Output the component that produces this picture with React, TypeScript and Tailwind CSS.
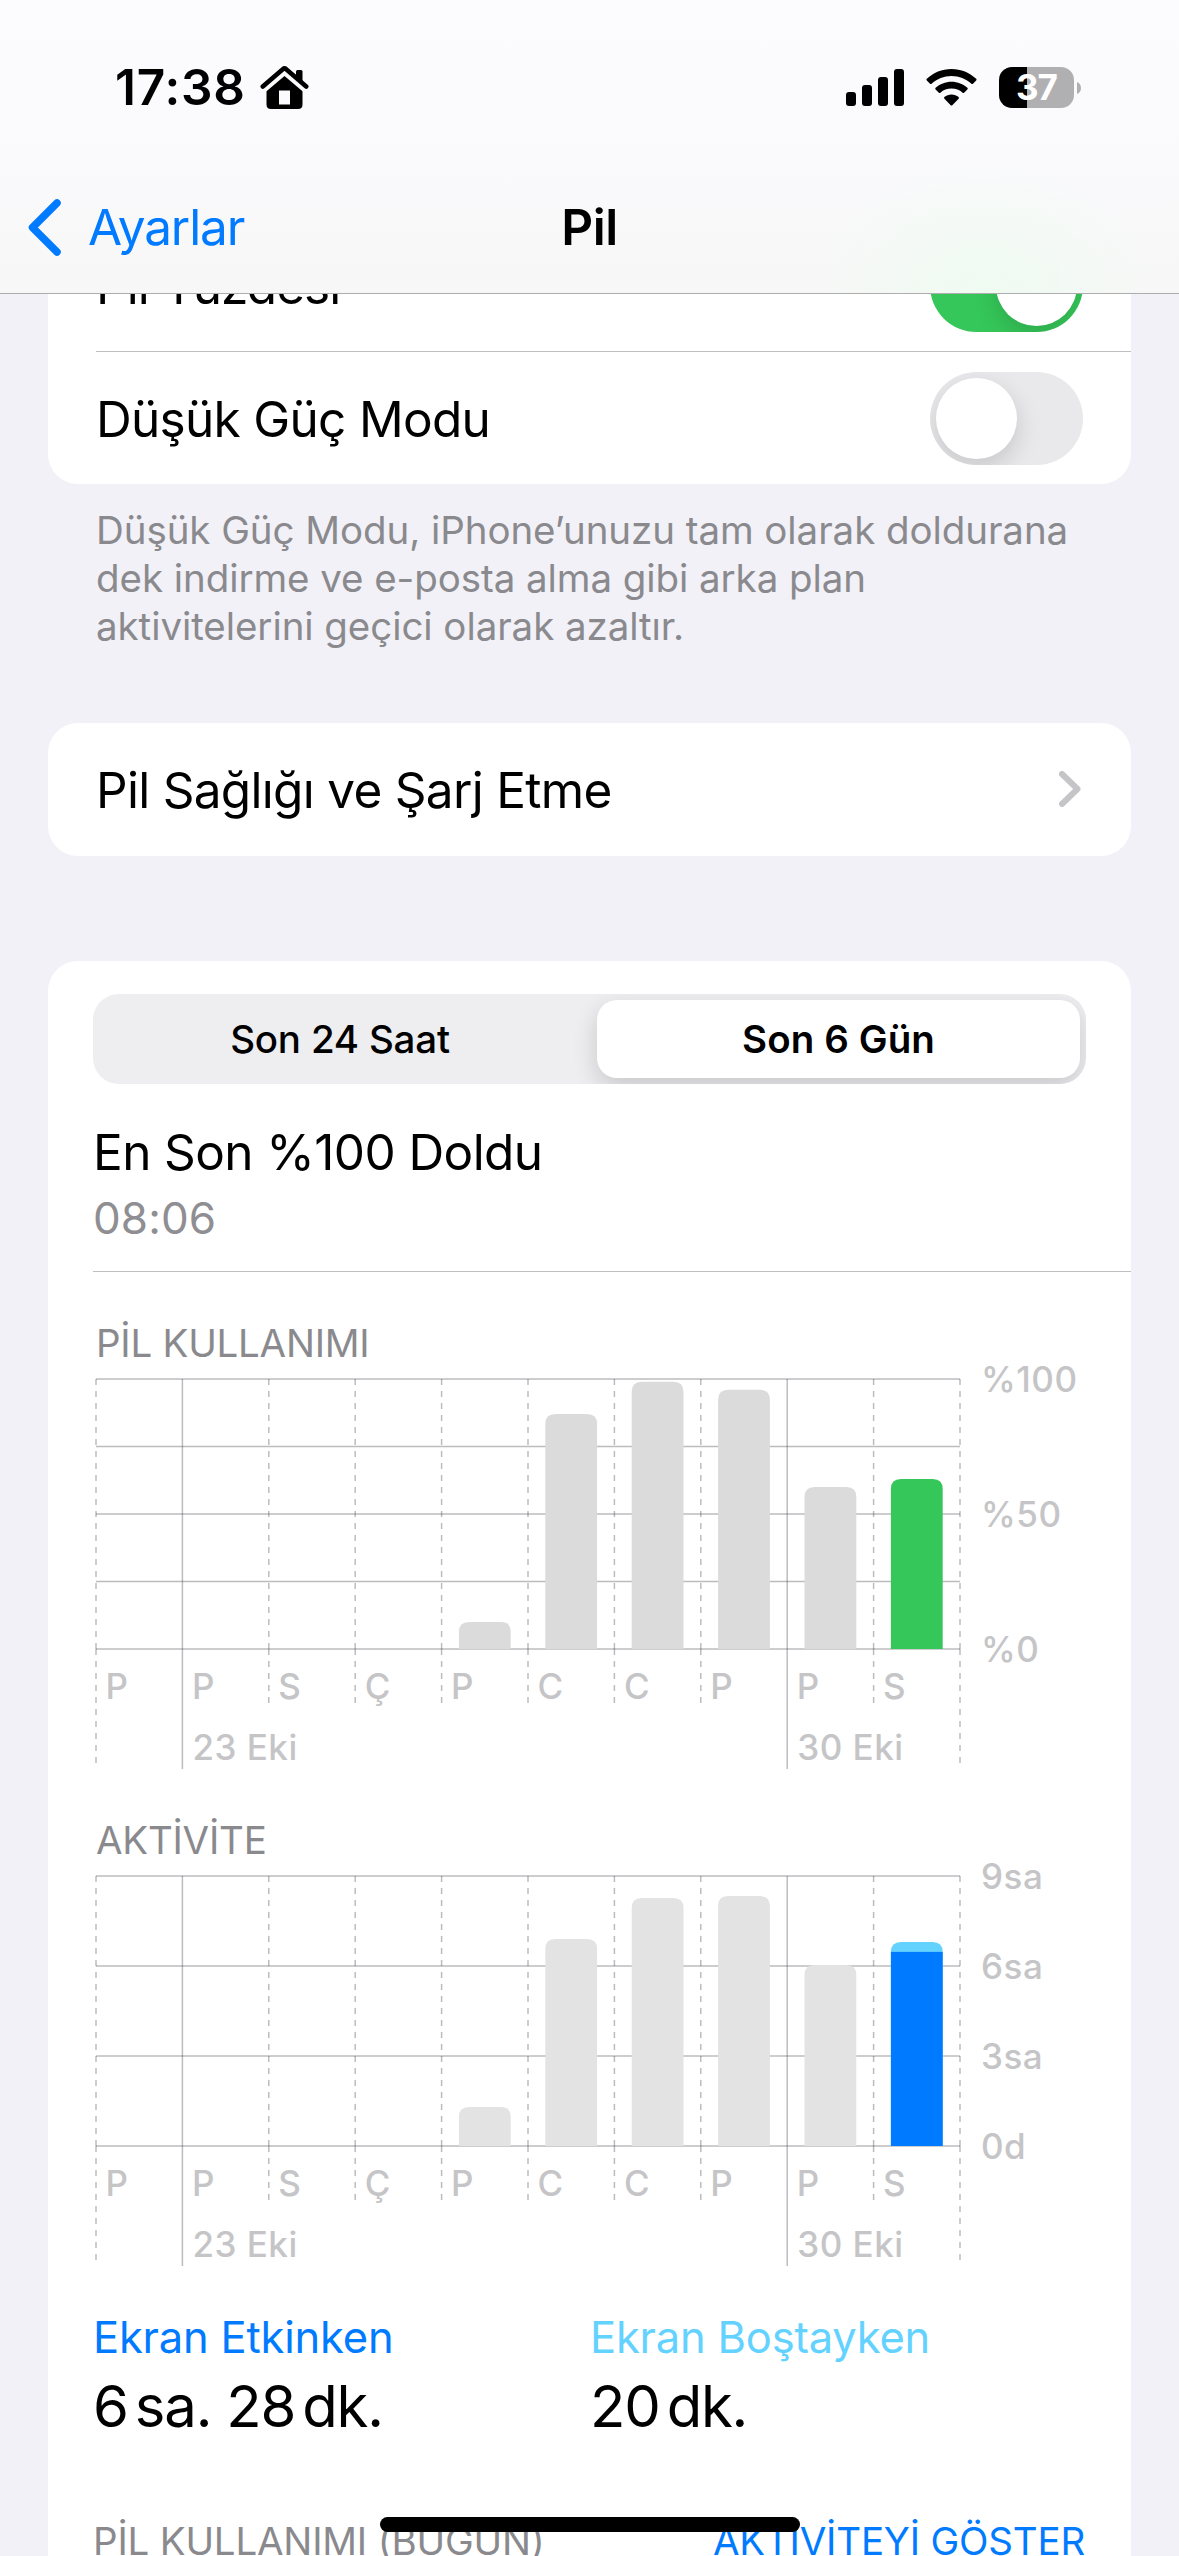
import { useState } from "react";

interface Bar {
  day: string;
  value: number;
  idle?: number;
}

interface ChartProps {
  title: string;
  bars: Bar[];
  max: number;
  step: number;
  labels: { value: number; text: string }[];
  barClass: string;
  activeClass: string;
}

const COL = 86.4;
const PLOT_W = 864;
const PLOT_H = 270;

const usage: Bar[] = [
  { day: "P", value: 0 },
  { day: "P", value: 0 },
  { day: "S", value: 0 },
  { day: "Ç", value: 0 },
  { day: "P", value: 10 },
  { day: "C", value: 87 },
  { day: "C", value: 99 },
  { day: "P", value: 96 },
  { day: "P", value: 60 },
  { day: "S", value: 63 },
];

const activity: Bar[] = [
  { day: "P", value: 0 },
  { day: "P", value: 0 },
  { day: "S", value: 0 },
  { day: "Ç", value: 0 },
  { day: "P", value: 1.3 },
  { day: "C", value: 6.9 },
  { day: "C", value: 8.27 },
  { day: "P", value: 8.33 },
  { day: "P", value: 6.03 },
  { day: "S", value: 6.47, idle: 0.33 },
];

// weeks start on these columns
const weeks = [
  { col: 1, text: "23 Eki" },
  { col: 8, text: "30 Eki" },
];

const Chart: React.FC<ChartProps> = ({
  title,
  bars,
  max,
  step,
  labels,
  barClass,
  activeClass,
}) => {
  const lines: number[] = [];
  for (let v = 0; v <= max; v += step) lines.push(PLOT_H - (v / max) * PLOT_H);

  return (
    <section className="mt-[47px]">
      <h2 className="pl-[3px] text-[38.5px] leading-[48px] tracking-[-0.25px] text-[#8a8a8e]">
        {title}
      </h2>
      <svg
        width="1035"
        height="390"
        className="mt-[12px] ml-[3px] block overflow-visible"
      >
        <g className="stroke-[#3c3c43]/34" strokeWidth="1.5">
          {lines.map((y) => (
            <line key={y} x1="0" x2={PLOT_W} y1={y} y2={y} />
          ))}
          {Array.from({ length: 11 }, (_, i) => {
            const x = i * COL;
            if (weeks.some((w) => w.col === i)) {
              return <line key={i} x1={x} x2={x} y1="0" y2="390" />;
            }
            const end = i === 0 || i === 10 ? 384 : 324;
            return (
              <g key={i} strokeDasharray="6 6">
                <line x1={x} x2={x} y1="0" y2={PLOT_H} />
                <line x1={x} x2={x} y1={PLOT_H} y2={end} />
              </g>
            );
          })}
        </g>
        {bars.map((bar, i) => {
          if (!bar.value) return null;
          const x = i * COL + 17.3;
          const total = ((bar.value + (bar.idle || 0)) / max) * PLOT_H;
          const h = (bar.value / max) * PLOT_H;
          const top = PLOT_H - total;
          const last = i === bars.length - 1;
          return (
            <g key={i}>
              <path
                d={`M${x} ${PLOT_H}V${top + 10}q0 -10 10 -10h31.8q10 0 10 10V${PLOT_H}z`}
                className={bar.idle ? "fill-[#64d2ff]" : last ? activeClass : barClass}
              />
              {bar.idle && (
                <rect x={x} y={PLOT_H - h} width="51.8" height={h} className={activeClass} />
              )}
            </g>
          );
        })}
        <g className="fill-[#c5c5c7] text-[35px] font-medium tracking-[0.5px]">
          {bars.map((bar, i) => (
            <text key={i} x={i * COL + 9.5} y="320">
              {bar.day}
            </text>
          ))}
          {weeks.map((w) => (
            <text key={w.col} x={w.col * COL + 10} y="381">
              {w.text}
            </text>
          ))}
          {labels.map((l) => (
            <text
              key={l.text}
              x="885"
              y={PLOT_H - (l.value / max) * PLOT_H + 13}
            >
              {l.text}
            </text>
          ))}
        </g>
      </svg>
    </section>
  );
};

const Toggle: React.FC<{ on: boolean; onClick: () => void }> = ({ on, onClick }) => (
  <button
    onClick={onClick}
    className={`flex h-[93px] w-[153px] overflow-hidden rounded-full p-[6px] ${
      on ? "justify-end bg-[#35c759]" : "bg-[#e9e9eb]"
    }`}
  >
    <span className="size-[81px] rounded-full bg-white shadow-[0_9px_24px_rgba(0,0,0,0.15)]" />
  </button>
);

const StatusBar = () => (
  <div className="flex h-[161px] items-center pt-[14px] pl-[115px]">
    <span className="w-[145px] text-[49.5px] font-semibold tracking-[0.8px]">17:38</span>
    <svg width="49" height="43" viewBox="0 0 49 43">
      <path
        d="M2.8 20.5 22.8 3.2Q24.5 1.8 26.2 3.2L46.2 20.5"
        fill="none"
        stroke="black"
        strokeWidth="4.6"
        strokeLinecap="round"
      />
      <path d="M36 5.5Q36 4 37.5 4H41Q42.5 4 42.5 5.5V16L36 10.5z" />
      <path
        fillRule="evenodd"
        d="M24.5 10 42.5 25.3V38.5Q42.5 43 38 43H11Q6.5 43 6.5 38.5V25.3zM19 24.5V38.5H30V24.5z"
      />
    </svg>
    <svg width="58" height="37" viewBox="0 0 58 37" className="ml-[537px]">
      <rect x="0" y="23" width="10" height="14" rx="3" />
      <rect x="16" y="16" width="10" height="21" rx="3" />
      <rect x="32" y="8" width="10" height="29" rx="3" />
      <rect x="48" y="0" width="10" height="37" rx="3" />
    </svg>
    <svg width="51" height="37" viewBox="0 0 51 37" className="ml-[22px]">
      <path d="M25.5 0C35 0 43.7 3.7 50.2 9.8Q51 10.6 50.2 11.4L47 14.7Q46.2 15.5 45.4 14.7C40.1 9.9 33.1 7 25.5 7S10.9 9.9 5.6 14.7Q4.8 15.5 4 14.7L.8 11.4Q0 10.6 .8 9.8C7.3 3.7 16 0 25.5 0z" />
      <path d="M25.5 12.7C31.6 12.7 37.2 15 41.4 18.8Q42.2 19.6 41.4 20.4L38.1 23.7Q37.4 24.4 36.6 23.7C33.6 21.1 29.7 19.6 25.5 19.6S17.4 21.1 14.4 23.7Q13.6 24.4 12.9 23.7L9.6 20.4Q8.8 19.6 9.6 18.8C13.8 15 19.4 12.7 25.5 12.7z" />
      <path d="M25.5 25.5C28.2 25.5 30.7 26.5 32.6 28.1Q33.4 28.9 32.6 29.7L26.3 36.2Q25.5 37 24.7 36.2L18.4 29.7Q17.6 28.9 18.4 28.1C20.3 26.5 22.8 25.5 25.5 25.5z" />
    </svg>
    <div className="ml-[22px] flex h-[41px] w-[75px] items-center justify-center rounded-[13px] bg-linear-to-r from-black from-37% to-[#b0b0b2] to-37%">
      <span className="text-[35px] leading-none font-bold tracking-[-1px] text-white">37</span>
    </div>
    <svg width="4" height="12" viewBox="0 0 4 12" className="ml-[3px]">
      <path d="M0 0C5.3 1.5 5.3 10.5 0 12z" fill="#b0b0b2" />
    </svg>
  </div>
);

function App() {
  const [percent, setPercent] = useState(true);
  const [lowPower, setLowPower] = useState(false);

  return (
    <div className="relative h-[2556px] w-[1179px] overflow-hidden bg-[#f2f1f7] font-['Inter','Liberation_Sans',sans-serif] text-black">
      <header className="h-[294px] border-b border-[#adadae] bg-[radial-gradient(ellipse_170px_130px_at_985px_294px,#effbf1,transparent),linear-gradient(#fcfcfe,#fafafc_55%,#f7f7f7)]">
        <StatusBar />
        <nav className="grid h-[132px] grid-cols-3 items-center text-[49.5px]">
          <button className="flex items-center pl-[27px] text-[#007aff]">
            <svg width="34" height="57" viewBox="0 0 34 57" fill="none">
              <path
                d="M30 4 5.5 28.5 30 53"
                stroke="currentColor"
                strokeWidth="7.5"
                strokeLinecap="round"
                strokeLinejoin="round"
              />
            </svg>
            <span className="ml-[27px] tracking-[-1.1px]">Ayarlar</span>
          </button>
          <h1 className="text-center font-semibold tracking-[-0.5px]">Pil</h1>
        </nav>
      </header>

      <main className="h-[2262px] overflow-hidden px-[48px] text-[49.5px] tracking-[-0.7px]">
        <div className="-mt-[74px] rounded-b-[30px] bg-white pl-[48px]">
          <div className="flex h-[132px] items-center justify-between border-b border-[#c0c0c3] pr-[48px]">
            <span className="pt-[2px] tracking-[-0.9px]">Pil Yüzdesi</span>
            <Toggle on={percent} onClick={() => setPercent(!percent)} />
          </div>
          <div className="flex h-[132px] items-center justify-between pr-[48px]">
            <span className="pt-[2px]">Düşük Güç Modu</span>
            <Toggle on={lowPower} onClick={() => setLowPower(!lowPower)} />
          </div>
        </div>
        <p className="pt-[22px] pl-[48px] text-[38.5px] leading-[48px] tracking-[-0.07px] text-[#8a8a8e]">
          Düşük Güç Modu, iPhone’unuzu tam olarak doldurana
          <br />
          dek indirme ve e-posta alma gibi arka plan
          <br />
          aktivitelerini geçici olarak azaltır.
        </p>

        <div className="mt-[73px] flex h-[133px] items-center justify-between rounded-[30px] bg-white pr-[50px] pl-[48px]">
          <span className="pt-[2px]">Pil Sağlığı ve Şarj Etme</span>
          <svg width="22" height="36" viewBox="0 0 22 36" fill="none" className="-mt-[1px]">
            <path
              d="M3 3 18.5 18 3 33"
              stroke="#c5c5c7"
              strokeWidth="6"
              strokeLinecap="round"
              strokeLinejoin="round"
            />
          </svg>
        </div>

        <div className="mt-[105px] rounded-t-[30px] bg-white pt-[33px] pl-[45px]">
          <div className="flex h-[90px] w-[993px] justify-between overflow-hidden rounded-[26px] bg-[#eeeef0] p-[6px] text-[38.5px] font-medium tracking-[-0.2px]">
            <button className="w-[482px] pt-[1px]">Son 24 Saat</button>
            <button className="w-[483px] rounded-[20px] bg-white pt-[1px] font-semibold tracking-[0.1px] shadow-[0_9px_24px_rgba(0,0,0,0.16)]">
              Son 6 Gün
            </button>
          </div>

          <div className="border-b border-[#c0c0c3] pb-[28px]">
            <p className="mt-[38px] leading-[60px] tracking-[-0.6px]">En Son %100 Doldu</p>
            <p className="mt-[11px] text-[44px] leading-[50px] tracking-[0.1px] text-[#8e8e93]">
              08:06
            </p>
          </div>

          <Chart
            title="PİL KULLANIMI"
            bars={usage}
            max={100}
            step={25}
            labels={[
              { value: 100, text: "%100" },
              { value: 50, text: "%50" },
              { value: 0, text: "%0" },
            ]}
            barClass="fill-[#dbdbdb]"
            activeClass="fill-[#35c759]"
          />
          <Chart
            title="AKTİVİTE"
            bars={activity}
            max={9}
            step={3}
            labels={[
              { value: 9, text: "9sa" },
              { value: 6, text: "6sa" },
              { value: 3, text: "3sa" },
              { value: 0, text: "0d" },
            ]}
            barClass="fill-[#e3e3e3]"
            activeClass="fill-[#007aff]"
          />

          <div className="mt-[46px] grid w-[994px] grid-cols-2">
            <div>
              <p className="text-[43.5px] leading-[50px] tracking-[-0.2px] text-[#007aff]">
                Ekran Etkinken
              </p>
              <p className="mt-[9px] text-[58px] leading-[70px] tracking-[-1.2px]">
                6&#8202;<span className="ml-[3px]">sa.</span> 28&#8202;
                <span className="ml-[3px]">dk.</span>
              </p>
            </div>
            <div>
              <p className="text-[43.5px] leading-[50px] tracking-[-0.2px] text-[#64d2ff]">
                Ekran Boştayken
              </p>
              <p className="mt-[9px] text-[58px] leading-[70px] tracking-[-1.2px]">
                20&#8202;<span className="ml-[3px]">dk.</span>
              </p>
            </div>
          </div>

          <div className="mt-[76px] flex w-[992px] justify-between text-[38.5px] leading-[48px] tracking-[-0.2px]">
            <span className="text-[#8a8a8e]">PİL KULLANIMI (BUGÜN)</span>
            <span className="text-[#007aff]">AKTİVİTEYİ GÖSTER</span>
          </div>
        </div>
      </main>

      <div className="absolute bottom-[24px] left-[380px] h-[15px] w-[420px] rounded-full bg-black" />
    </div>
  );
}

export default App;
